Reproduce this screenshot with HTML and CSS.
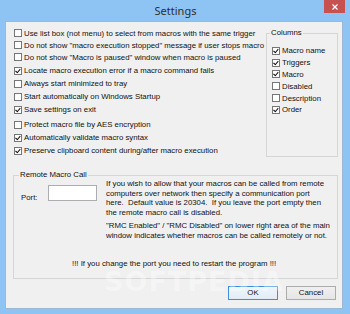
FILE: index.html
```html
<!DOCTYPE html>
<html>
<head>
    <title>Settings</title>
    <link rel="stylesheet" href="styles.css">
</head>
<body>

<div class="window">
    <div class="titlebar">
        <span class="title">Settings</span>
        <span class="close-btn">
            <svg width="6" height="6" viewBox="0 0 6 6"><path d="M0.5 0.5 L5.5 5.5 M5.5 0.5 L0.5 5.5" stroke="#fff" stroke-width="1.3"/></svg>
        </span>
    </div>

    <div class="client">
        <div class="top">
            <div class="options">
                <div class="opt"><span class="box"></span>Use list box (not menu) to select from macros with the same trigger</div>
                <div class="opt"><span class="box"></span>Do not show "macro execution stopped" message if user stops macro</div>
                <div class="opt"><span class="box"></span>Do not show "Macro is paused" window when macro is paused</div>
                <div class="opt tall first"><span class="box checked"></span>Locate macro execution error if a macro command fails</div>
                <div class="opt tall"><span class="box"></span>Always start minimized to tray</div>
                <div class="opt tall"><span class="box"></span>Start automatically on Windows Startup</div>
                <div class="opt tall"><span class="box checked"></span>Save settings on exit</div>
                <div class="opt tall gap"><span class="box"></span>Protect macro file by AES encryption</div>
                <div class="opt tall"><span class="box checked"></span>Automatically validate macro syntax</div>
                <div class="opt tall"><span class="box checked"></span>Preserve clipboard content during/after macro execution</div>
            </div>

            <fieldset class="columns">
                <legend>Columns</legend>
                <div class="col-opt"><span class="box checked"></span>Macro name</div>
                <div class="col-opt"><span class="box checked"></span>Triggers</div>
                <div class="col-opt"><span class="box checked"></span>Macro</div>
                <div class="col-opt"><span class="box"></span>Disabled</div>
                <div class="col-opt"><span class="box"></span>Description</div>
                <div class="col-opt"><span class="box checked"></span>Order</div>
            </fieldset>
        </div>

        <fieldset class="remote">
            <legend>Remote Macro Call</legend>
            <div class="remote-body">
                <span class="port-label">Port:</span>
                <span class="port-input"></span>
                <div class="info">
                    <p>If you wish to allow that your macros can be called from remote<br>
                    computers over network then specify a communication port<br>
                    here.&nbsp; Default value is 20304.&nbsp; If you leave the port empty then<br>
                    the remote macro call is disabled.</p>
                    <p>"RMC Enabled" / "RMC Disabled" on lower right area of the main<br>
                    window indicates whether macros can be called remotely or not.</p>
                </div>
            </div>
            <div class="warning">!!! If you change the port you need to restart the program !!!</div>
        </fieldset>

        <div class="buttons">
            <button class="btn default">OK</button>
            <button class="btn">Cancel</button>
        </div>
    </div>

    <div class="watermark">SOFTPEDIA</div>
</div>

</body>
</html>
```

FILE: styles.css
```css
body {
    margin: 0;
    padding: 0;
    font-family: "Liberation Sans", Arial, sans-serif;
    font-size: 7.8px;
    color: #111;
}
.window {
    width: 350px;
    height: 314px;
    background: #8ec4f3;
    display: flex;
    flex-direction: column;
    position: relative;
}
.titlebar {
    height: 21px;
    flex-shrink: 0;
    display: flex;
    align-items: flex-start;
}
.title {
    flex: 1;
    text-align: center;
    padding-left: 27px;
    font-family: "Noto Sans", "Open Sans", sans-serif;
    font-size: 11px;
    line-height: 22px;
    color: #2e2e2e;
}
.close-btn {
    width: 21px;
    height: 13px;
    margin-right: 5px;
    background: #c75050;
    display: flex;
    align-items: center;
    justify-content: center;
}
.client {
    flex: 1;
    margin: 0 7px 5px 5px;
    background: #f0f0f0;
    border: 1px solid #9ab9d6;
    display: flex;
    flex-direction: column;
}
.top {
    display: flex;
    padding-top: 5px;
}
.options {
    flex: 1;
    padding-left: 8px;
}
.opt, .col-opt {
    display: flex;
    align-items: center;
    gap: 2px;
    height: 12px;
    white-space: nowrap;
}
.opt.tall {
    height: 13px;
}
.opt.first {
    margin-top: 1px;
}
.opt.gap {
    margin-top: 2px;
}
.col-opt {
    height: 11.8px;
}
.box {
    width: 8px;
    height: 8px;
    box-sizing: border-box;
    border: 1px solid #767676;
    background: #fff;
    flex-shrink: 0;
    position: relative;
}
.box.checked::after {
    content: "";
    position: absolute;
    left: 1px;
    top: 0px;
    width: 2px;
    height: 4px;
    border-right: 1.4px solid #111;
    border-bottom: 1.4px solid #111;
    transform: rotate(40deg);
    transform-origin: 60% 60%;
}
fieldset {
    border: 1px solid #d6d6d6;
    margin: 0;
    min-width: 0;
}
legend {
    padding: 0 1px;
    line-height: 10px;
}
.columns {
    width: 72px;
    box-sizing: border-box;
    margin: 1px 4px 0 0;
    padding: 7px 0 5px 5px;
}
.columns legend {
    margin-left: -2px;
}
.remote {
    margin: 14px 4px 0 7px;
    padding: 0 4px 9px 7px;
}
.remote legend {
    line-height: 8px;
    margin-left: -2px;
}
.remote-body {
    display: flex;
    align-items: flex-start;
}
.port-label {
    width: 27px;
    margin-top: 14px;
    line-height: 10px;
}
.port-input {
    width: 49px;
    height: 16px;
    box-sizing: border-box;
    margin-top: 6px;
    background: #fff;
    border: 1px solid #abadb3;
}
.info {
    flex: 1;
    margin-left: 9px;
    line-height: 9.6px;
    white-space: nowrap;
}
.info p {
    margin: 0 0 4px 0;
}
.warning {
    margin-top: 14px;
    padding-left: 51px;
    line-height: 10px;
}
.buttons {
    display: flex;
    justify-content: flex-end;
    gap: 8px;
    margin: 7px 6px 0 0;
}
.btn {
    width: 50px;
    height: 14px;
    padding: 0;
    border: 1px solid #acacac;
    background: linear-gradient(#f0f0f0, #e5e5e5);
    font-family: "Liberation Sans", Arial, sans-serif;
    font-size: 7.8px;
    color: #111;
}
.btn.default {
    border-color: #3d8ee0;
    background: linear-gradient(#eef5fc, #e3ecf5);
}
.watermark {
    position: absolute;
    left: 104px;
    top: 266px;
    font-family: "DejaVu Sans", sans-serif;
    font-size: 27px;
    font-weight: bold;
    letter-spacing: 1px;
    color: rgba(255, 255, 255, 0.35);
    pointer-events: none;
}
```
